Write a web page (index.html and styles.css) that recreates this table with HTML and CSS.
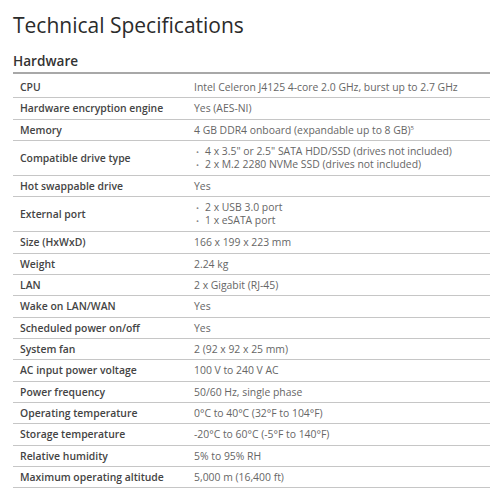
FILE: index.html
```html
<!DOCTYPE html>
<html>
<head>
<meta charset="utf-8">
<link rel="stylesheet" href="styles.css">
</head>
<body>
<div class="page">
  <h1 class="title">Technical Specifications</h1>
  <h2 class="section">Hardware</h2>
  <div class="specs">
    <div class="row"><div class="label">CPU</div><div class="value">Intel Celeron J4125 4-core 2.0 GHz, burst up to 2.7 GHz</div></div>
    <div class="row"><div class="label">Hardware encryption engine</div><div class="value">Yes (AES-NI)</div></div>
    <div class="row"><div class="label">Memory</div><div class="value">4 GB DDR4 onboard (expandable up to 8 GB)<sup class="note">5</sup></div></div>
    <div class="row"><div class="label">Compatible drive type</div><div class="value"><ul class="list"><li>4 x 3.5" or 2.5" SATA HDD/SSD (drives not included)</li><li>2 x M.2 2280 NVMe SSD (drives not included)</li></ul></div></div>
    <div class="row"><div class="label">Hot swappable drive</div><div class="value">Yes</div></div>
    <div class="row"><div class="label">External port</div><div class="value"><ul class="list"><li>2 x USB 3.0 port</li><li>1 x eSATA port</li></ul></div></div>
    <div class="row"><div class="label">Size (HxWxD)</div><div class="value">166 x 199 x 223 mm</div></div>
    <div class="row"><div class="label">Weight</div><div class="value">2.24 kg</div></div>
    <div class="row"><div class="label">LAN</div><div class="value">2 x Gigabit (RJ-45)</div></div>
    <div class="row"><div class="label">Wake on LAN/WAN</div><div class="value">Yes</div></div>
    <div class="row"><div class="label">Scheduled power on/off</div><div class="value">Yes</div></div>
    <div class="row"><div class="label">System fan</div><div class="value">2 (92 x 92 x 25 mm)</div></div>
    <div class="row"><div class="label">AC input power voltage</div><div class="value">100 V to 240 V AC</div></div>
    <div class="row"><div class="label">Power frequency</div><div class="value">50/60 Hz, single phase</div></div>
    <div class="row"><div class="label">Operating temperature</div><div class="value">0°C to 40°C (32°F to 104°F)</div></div>
    <div class="row"><div class="label">Storage temperature</div><div class="value">-20°C to 60°C (-5°F to 140°F)</div></div>
    <div class="row"><div class="label">Relative humidity</div><div class="value">5% to 95% RH</div></div>
    <div class="row"><div class="label">Maximum operating altitude</div><div class="value">5,000 m (16,400 ft)</div></div>
  </div>
</div>
</body>
</html>
```

FILE: styles.css
```css
html, body {
  margin: 0;
  padding: 0;
  background: #fff;
}
body {
  font-family: "Open Sans", "DejaVu Sans", sans-serif;
  color: #333;
}
.page {
  padding: 11px 10px 0 13px;
}
.title {
  margin: 0;
  font-size: 21px;
  line-height: 28px;
  font-weight: 400;
  color: #2b2b2b;
}
.section {
  margin: 12px 0 0 0;
  font-size: 13.6px;
  line-height: 20px;
  font-weight: 600;
  color: #333;
  padding-bottom: 1px;
  border-bottom: 2px solid #a8a8a8;
}
.specs {
  margin-top: 3px;
}
.row {
  display: flex;
  align-items: center;
  border-bottom: 1px solid #c6c6c6;
  padding: 4px 0;
}
.label {
  flex: 0 0 174px;
  padding-left: 7px;
  font-size: 10.4px;
  line-height: 12.33px;
  font-weight: 600;
  color: #444;
}
.value {
  flex: 1;
  font-size: 10.4px;
  line-height: 12.33px;
  color: #666;
}
.note {
  font-size: 6px;
  line-height: 0;
  vertical-align: 4px;
}
.list {
  margin: 0;
  padding: 0;
  list-style: none;
}
.list li {
  line-height: 12px;
}
.list li::before {
  content: "•";
  display: inline-block;
  width: 9px;
  padding-left: 2px;
  color: #888;
  font-size: 8px;
}
```
